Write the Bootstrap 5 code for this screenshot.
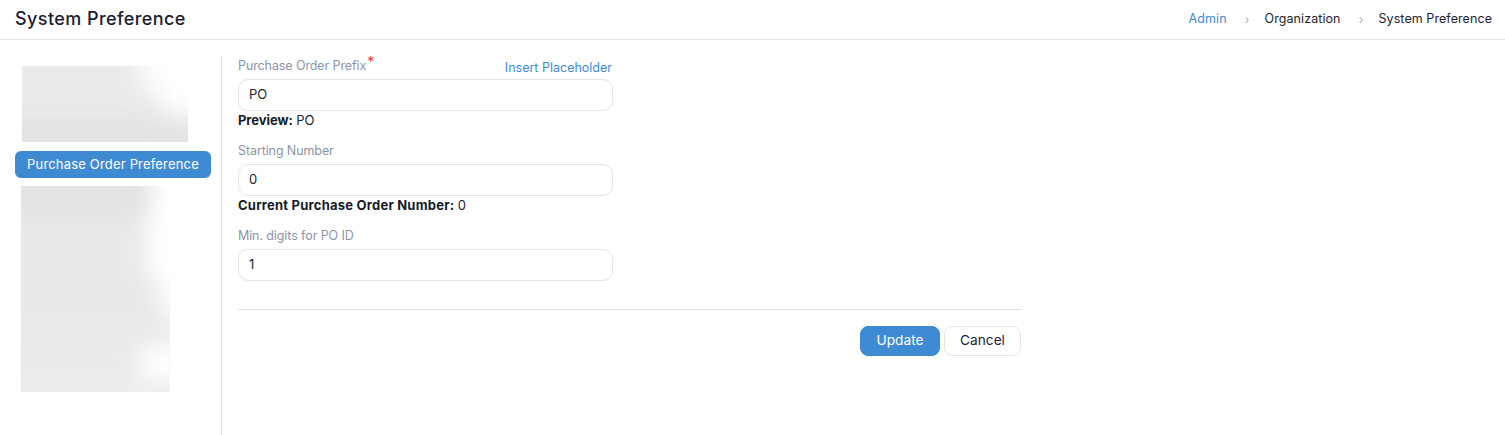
<!DOCTYPE html>
<html lang="en">
<head>
<meta charset="utf-8">
<title>System Preference</title>
<link href="https://cdn.jsdelivr.net/npm/bootstrap@5.3.0/dist/css/bootstrap.min.css" rel="stylesheet">
<style>
html,body{height:100%;overflow:hidden}
body{font-family:Inter,"Noto Sans","Liberation Sans",sans-serif;font-size:13px;color:#1e2330;background:#fff}
.top-bar{height:40px;border-bottom:1px solid #e3e4ec;padding:0 13px 0 15px}
.page-name{font-size:18px;font-weight:500;line-height:1;margin:0 0 2px;color:#1b2030;letter-spacing:.42px}
.crumbs{font-size:12.5px;margin:0;letter-spacing:.07px}
.crumbs a{color:#3f8bd3;text-decoration:none}
.crumb-sep{width:38px;padding-left:3px;text-align:center;color:#a5adc0;font-size:12px}
.body-row{height:395px}
.side-col{width:222px;flex:none;border-right:1px solid #e3e4e8;margin-top:16px}
.blur-box{overflow:hidden;background:#fff}
.blur-top{width:166px;height:76px;margin:10px 0 9px 22px}
.blur-low{width:149px;height:206px;margin:8px 0 0 21px}
.blur-lines{filter:blur(11px);margin:-24px 0 0 -30px}
.blur-lines span{display:block}
.t1{width:150px;height:48px;background:#e9eaeb}
.t2{width:170px;height:26px;background:#eaebec}
.t3{width:240px;height:50px;background:#e2e3e4}
.l1{width:160px;height:56px;background:#e2e3e3}
.l2{width:155px;height:60px;background:#e8e9ea}
.l3{width:170px;height:36px;background:#e8e9ea}
.l4{width:190px;height:32px;background:#e9eaeb}
.l5{width:150px;height:34px;background:#eaebec}
.l6{width:200px;height:50px;background:#ecedee}
.side-pill{display:block;width:196px;height:27px;margin-left:15px;border-radius:6px;background:#3f8bd3;color:#fff;font-size:13px;line-height:27px;text-align:center;text-decoration:none;letter-spacing:.18px;white-space:nowrap}
.form-col{width:784px;flex:none;margin-left:16px;padding-top:16px}
.field-zone{width:375px}
.lbl-row{height:18px;margin-bottom:5px}
.field-lbl{font-size:12.5px;color:#8d94a6;margin:0 0 4px;padding-top:1px;line-height:18px;letter-spacing:-.1px}
.lbl-row .field-lbl{margin:0}
.req{color:#e5343d;font-size:14px;line-height:1;position:relative;top:-3px;margin-left:1px}
.ins-link{font-size:12.5px;color:#3f8bd3;text-decoration:none;position:relative;top:3px;margin-right:1px}
.fld{height:32px;border:1px solid #e1e5ef;border-radius:10px;padding:0 10px 3px;font-size:13px;color:#1e2330;box-shadow:none}
.note-line{font-size:13px;line-height:19px;height:19px;letter-spacing:-.1px;white-space:nowrap;color:#1e2330}
.note-line b{font-weight:700;color:#161b28;letter-spacing:.23px}
.note-line.note-short b{letter-spacing:-.05px}
.gap-a{margin-top:11px}
.sep{border:0;border-top:1px solid #dfe3ea;opacity:1;margin:28px 0 16px}
.act{height:30px;font-size:13.7px;line-height:1;border-radius:8px;padding:0}
.act-main{width:80px;background:#3f8bd3;border:1px solid #3f8bd3;color:#fff}
.act-alt{width:77px;background:#fff;border:1px solid #e1e5ef;color:#1e2330}
.act-row{padding-right:1px}
</style>
</head>
<body>
<header class="top-bar d-flex align-items-center justify-content-between">
  <h1 class="page-name">System Preference</h1>
  <nav class="crumbs d-flex align-items-center" aria-label="breadcrumb">
    <a href="#">Admin</a><span class="crumb-sep">›</span><span>Organization</span><span class="crumb-sep">›</span><span>System Preference</span>
  </nav>
</header>
<div class="body-row d-flex">
  <aside class="side-col">
    <div class="blur-box blur-top"><div class="blur-lines"><span class="t1"></span><span class="t2"></span><span class="t3"></span></div></div>
    <a href="#" class="side-pill">Purchase Order Preference</a>
    <div class="blur-box blur-low"><div class="blur-lines"><span class="l1"></span><span class="l2"></span><span class="l3"></span><span class="l4"></span><span class="l5"></span><span class="l6"></span></div></div>
  </aside>
  <main class="form-col">
    <form>
      <div class="field-zone">
        <div class="lbl-row d-flex justify-content-between align-items-center">
          <label class="field-lbl">Purchase Order Prefix<span class="req">*</span></label>
          <a href="#" class="ins-link">Insert Placeholder</a>
        </div>
        <input class="form-control fld" value="PO">
        <div class="note-line note-short"><b>Preview:</b> PO</div>
        <label class="field-lbl gap-a d-block">Starting Number</label>
        <input class="form-control fld" value="0">
        <div class="note-line"><b>Current Purchase Order Number:</b> 0</div>
        <label class="field-lbl gap-a d-block">Min. digits for PO ID</label>
        <input class="form-control fld" value="1">
      </div>
      <hr class="sep">
      <div class="act-row d-flex justify-content-end gap-1">
        <button type="button" class="btn act act-main">Update</button>
        <button type="button" class="btn act act-alt">Cancel</button>
      </div>
    </form>
  </main>
</div>
<script src="https://cdn.jsdelivr.net/npm/bootstrap@5.3.0/dist/js/bootstrap.bundle.min.js"></script>
</body>
</html>
